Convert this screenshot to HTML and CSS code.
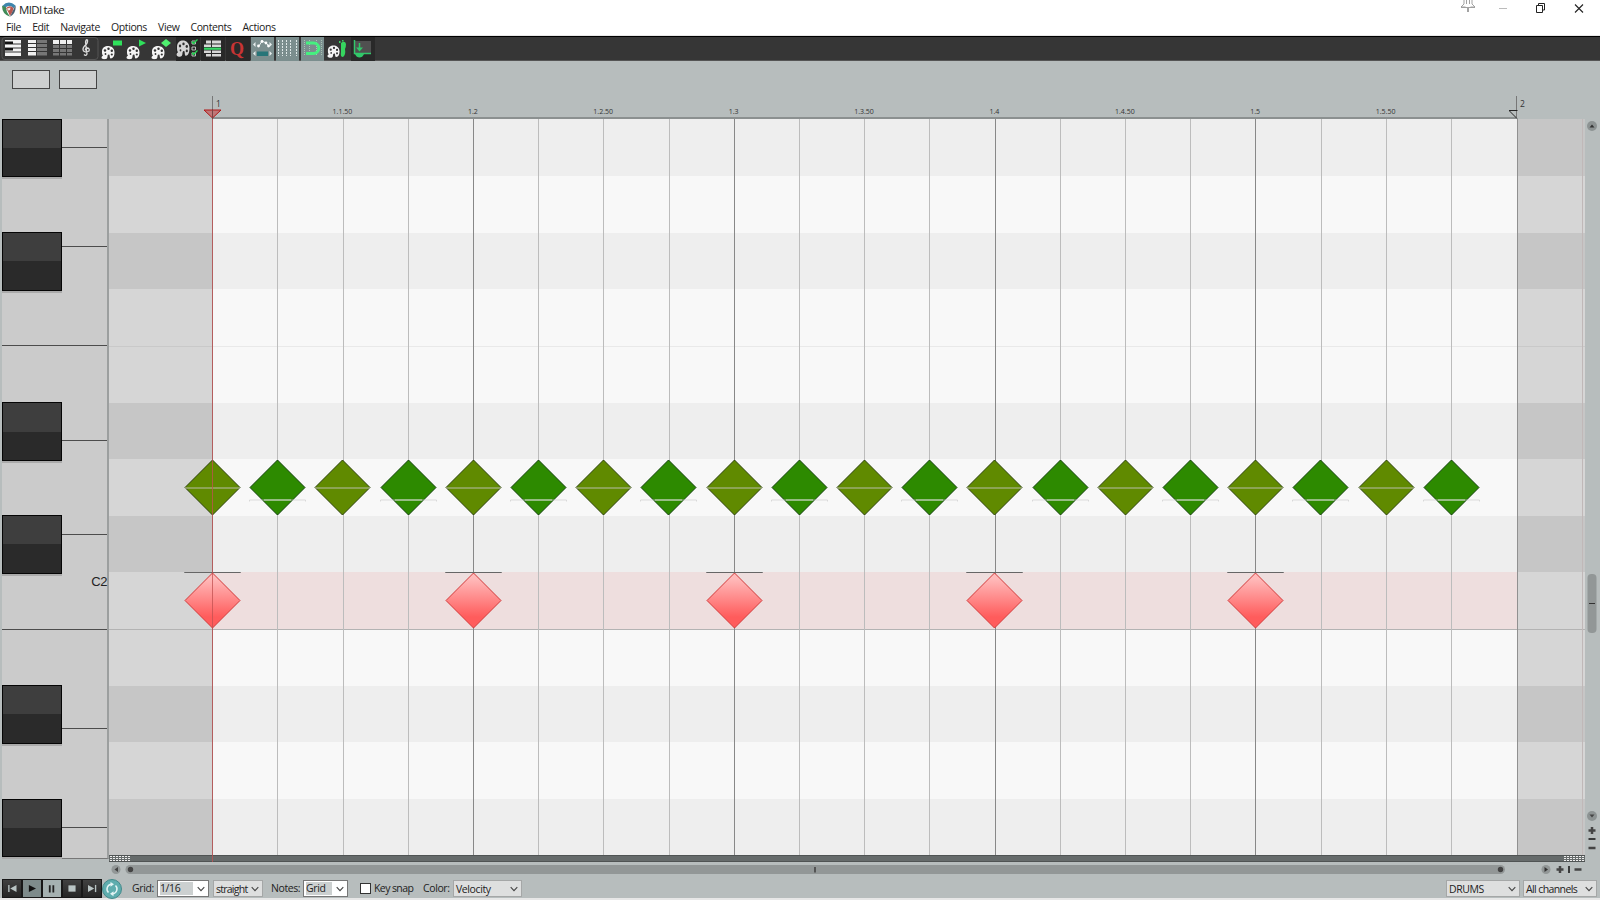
FILE: index.html
```html
<!DOCTYPE html>
<html lang="en">
<head>
  <meta charset="UTF-8" />
  <title>MIDI take</title>
  <link rel="stylesheet" href="styles.css">
</head>
<body>
  <svg width="0" height="0" class="defs">
    <defs>
      <linearGradient id="red" x1="0" y1="0" x2="0" y2="1">
        <stop offset="0.1" stop-color="#ffbaba"/><stop offset="0.8" stop-color="#ff5c5c"/>
      </linearGradient>
      <symbol id="palette" viewBox="0 0 14 14">
        <path fill="#f4f4f4" d="M1 6C1 2 4 .5 7 .5s6.500 2 6.500 6.500c0 3-1 5.500-3.500 6-1.500 0-1-2-1.500-3.500-1-1-2 0-2 1.500C6.500 14 4 14 2 13.500 0 13 0 11 2 10 1 9 1 8 1 6z"/>
        <g fill="#333"><circle cx="4" cy="5" r="1.200"/><circle cx="7.500" cy="3.200" r="1.200"/><circle cx="10.800" cy="5.300" r="1.200"/><circle cx="10.800" cy="9" r="1.100"/><circle cx="4.500" cy="8.500" r=".9"/></g>
      </symbol>
      <symbol id="chev" viewBox="0 0 8 6"><path d="M.7 1.200 4 4.600 7.300 1.200" fill="none" stroke="#444" stroke-width="1.100"/></symbol>
    </defs>
  </svg>

  <header class="titlebar">
    <svg class="logo" width="14" height="15" viewBox="0 0 14 15">
      <path fill="#3e86ad" d="M.3 4Q6.500-2.500 13.500 3.500L12 6.500Q7 2 3 6z"/>
      <path fill="#418b58" d="M.2 3.800 3.800 5 5 10 8 14.700Q-.5 12 .2 3.800z"/>
      <path fill="#b8574f" d="M4 6Q8 2.500 11.500 6L10.500 10 8 14 6.500 10.500z"/>
      <path fill="#4b5f70" d="M13.500 3.500Q14.500 11 8 14.700L11 8.500z"/>
      <path fill="#f3e4df" d="M5 6.500 8.500 5.500 8 8 6 8.500z"/>
    </svg>
    <span class="title">MIDI take</span>
    <svg class="winbtns" width="130" height="17" viewBox="0 0 130 17" fill="none">
      <path stroke="#999" stroke-width=".9" d="M5 0v4l-3 3h4.500M13 0v4l3 3h-4.500M2 7.500h14M7.500 0v4M10.500 0v4M8.500 8v4M9.500 8v4"/>
      <path stroke="#bbb" d="M40 8.500h8"/>
      <path stroke="#222" d="M77.500 5.500h6v7h-6zM79.500 5v-1.500h6v6.500h-2"/>
      <path stroke="#222" stroke-width="1.100" d="M116 4.500l8 8m0-8l-8 8"/>
    </svg>
  </header>

  <nav class="menu">
    <span>File</span><span>Edit</span><span>Navigate</span><span>Options</span><span>View</span><span>Contents</span><span>Actions</span>
  </nav>

  <div class="toolbar">
    <svg width="380" height="24" viewBox="0 0 380 24">
      <rect x="2" y=".5" width="96" height="22" rx="3" fill="none" stroke="#555"/>
      <!-- piano roll -->
      <path fill="#f4f4f4" d="M5 3h16v3.500H5zM5 7.500h16v3H5zM5 11.500h16v3H5zM5 15.500h16v3.500H5z"/>
      <path fill="#111" d="M5 4.500h8v2.500H5zM5 11h8v2.500H5z"/>
      <!-- named notes -->
      <path fill="#f0f0f0" d="M28 3h8v3h-8zM28 7h8v3h-8zM28 11h8v3h-8zM28 15h8v3.500h-8z"/>
      <path fill="#777" d="M37 3h10v3H37zM37 7h10v3H37zM37 11h10v3H37zM37 15h10v3.500H37z"/>
      <!-- event list -->
      <path fill="#f0f0f0" d="M53 3h6v4h-6zM60 3h6v4h-6zM67 3h5v4h-5z"/>
      <path fill="#777" d="M53 8h6v3h-6zM60 8h6v3h-6zM67 8h5v3h-5zM53 12h6v3h-6zM60 12h6v3h-6zM67 12h5v3h-5zM53 16h6v2.500h-6zM60 16h6v2.500h-6zM67 16h5v2.500h-5z"/>
      <!-- notation -->
      <path fill="none" stroke="#ddd" stroke-width="1.300" d="M84 17.500q2 2 3-.5L85.500 5q.5-3 2-2 .5 3-2.500 5.500-3 3-1.500 5.500 2.500 2 5.500 0 1-3-2-3-2 .5-1.500 2.500"/>
      <use href="#palette" x="101" y="8.500" width="14" height="14"/>
      <path fill="#2fe05b" d="M113 3.500h9v5h-9z"/>
      <use href="#palette" x="126" y="8.500" width="14" height="14"/>
      <path fill="#2fe05b" d="M139 2.500l7 3.500-7 3.500z"/>
      <use href="#palette" x="151" y="8.500" width="14" height="14"/>
      <path fill="#4ff06f" d="M161 6l5-4 5 4-5 4z"/>
      <path fill="#262626" d="M176 0h24v24h-24z"/>
      <svg x="176" y="3" width="14" height="17" viewBox="0 0 14 14" preserveAspectRatio="none" opacity=".85"><use href="#palette" width="14" height="14"/></svg>
      <g fill="none" stroke="#ccc" stroke-width=".9"><path d="M192 4h3.500v3H192zM192 10h3.500v3H192zM192 16h3.500v3H192z"/><path stroke="#23d851" stroke-width="1.300" d="M192 4.500l1.500 2 4-4M192 15.500l1.500 2 4-4"/></g>
      <path fill="#292929" d="M201 0h24v24h-24zM226 0h24v24h-24z"/>
      <path fill="#d8d8d8" d="M206 3.500h5v3h-5zM212 3.500h9v3h-9zM204 7.500h7v2.500h-7zM212 7.500h9v2.500h-9zM204 13.500h7v2.500h-7zM212 13.500h9v2.500h-9zM206 17h5v2.500h-5zM212 17h9v2.500h-9z"/>
      <path fill="#38d867" d="M204 10.600h17v2.200h-17z"/>
      <path fill="#7b8e8e" d="M251 0h23v24h-23zM276 0h23v24h-23zM301 0h23v24h-23z"/>
      <path fill="none" stroke="#e7eeee" d="M259 9l3-5 4 2 3 3"/><path fill="#e7eeee" d="M253 7.500l2.500-2.500v5zM272 7.500l-2.500-2.500v5zM253 16.500l2.500-2.500v5zM272 16.500l-2.500-2.500v5z"/>
      <g fill="#fff"><circle cx="258.500" cy="9" r="1.400"/><circle cx="262" cy="4.500" r="1.400"/><circle cx="266" cy="6" r="1.400"/><circle cx="268.500" cy="9" r="1.400"/></g>
      <path fill="#277578" d="M257 14.500h11v4.500h-11z"/>
      <path fill="none" stroke="#dfe8e8" stroke-dasharray="2 1" d="M278.500 3v16M282.500 3v16M286.500 3v16M290.500 3v16M296.500 3v16"/>
      <path fill="none" stroke="#a9c4b5" stroke-dasharray="1 1" d="M304.500 3v16M309.500 3v16M316.500 3v16M321.500 3v16"/>
      <path fill="none" stroke="#45f080" stroke-width="3" d="M306 6h7.500a5 5 0 0 1 0 10.500H306"/>
      <use href="#palette" x="327" y="8" width="13" height="13"/>
      <path fill="#36d65f" d="M341 6q4-3 5 1 0 3-1 5 1 6-2 8-3 0-2-5zM339 4h1.500v2H339zM342 3h1.500v1.500H342z"/>
      <path fill="#292929" d="M351 0h24v24h-24z"/><path fill="#505050" d="M355 4h16v12h-16z"/>
      <path fill="none" stroke="#31c86a" stroke-width="1.500" d="M354.500 3v13.500H371M359.500 6v6"/>
      <path fill="#31c86a" d="M356 10.500h7l-3.500 4zM355 17h9q-1.500 3.500-4.500 3.500t-4.500-3.500z"/>
      <text class="q" x="230" y="17.500">Q</text>
    </svg>
  </div>

  <div class="info"><div class="box"></div><div class="box"></div></div>

  <main class="editor">
    <div class="keys" id="keys"><span class="octave">C2</span></div>
    <div class="roll">
      <div class="ruler" id="ruler"></div>
      <div class="rows" id="rows"></div>
      <div class="lines" id="lines"></div>
      <div id="notes"></div>
      <i class="cursor"></i><i class="end"></i><i class="edge"></i>
      <svg class="mark start" width="19" height="10" viewBox="0 0 19 10"><path d="M1 1h17L9.500 9z" fill="#bf7777" stroke="#b01616"/><path d="M9.500 0v10" stroke="#744"/></svg>
      <svg class="mark stop" width="10" height="10" viewBox="0 0 10 10"><path d="M1 1.500h8.500M1.500 2l7.500 7.500" fill="none" stroke="#222"/></svg>
    </div>
    <div class="vscroll">
      <svg width="15" height="740" viewBox="0 0 15 740">
        <circle cx="7" cy="7" r="5" fill="#8d9393"/><path d="M4.500 8.500l2.500-3 2.500 3z" fill="#333"/>
        <rect x="2.500" y="455" width="9" height="59" rx="4" fill="#929797"/><path d="M4 484.500h6" stroke="#333"/>
        <circle cx="7" cy="697" r="5" fill="#8d9393"/><path d="M4.500 695.500l2.500 3 2.500-3z" fill="#444"/>
        <path d="M3.500 711.500h7M7 708v7M3.500 729h7" stroke="#444" stroke-width="2.500"/><path d="M3.500 720h7" stroke="#111" stroke-width="1.500"/>
      </svg>
    </div>
  </main>

  <div class="lane"><div class="strip"><i class="grip"></i><i class="grip"></i></div></div>

  <div class="hscroll">
    <svg width="1600" height="18" viewBox="0 0 1600 18">
      <circle cx="116" cy="7.500" r="4.500" fill="#929797"/><path d="M118 5v5l-3.500-2.500z" fill="#444"/>
      <rect x="125.500" y="3" width="1379.500" height="9" rx="4.500" fill="#929797"/>
      <circle cx="130.500" cy="7.500" r="2.700" fill="#444"/><circle cx="1500.500" cy="7.500" r="2.700" fill="#444"/><path d="M815 5v5.500" stroke="#444" stroke-width="1.600"/>
      <circle cx="1546" cy="7.500" r="4.500" fill="#929797"/><path d="M1544.500 5v5l3.500-2.500z" fill="#333"/>
      <path d="M1556.500 7.500h7M1560 4v7M1574.500 7.500h7" stroke="#444" stroke-width="2.500"/><path d="M1569 4v7" stroke="#111" stroke-width="1.500"/>
    </svg>
  </div>

  <footer class="bottom">
    <div class="transport">
      <span><svg viewBox="0 0 20 19"><path d="M6.500 5.500v8" stroke="#b9c4c4" stroke-width="1.500"/><path d="M15 5.500v8l-7-4z" fill="#b9c4c4"/></svg></span>
      <span class="play"><svg viewBox="0 0 20 19"><path d="M6.500 5.500v8l8-4z" fill="#111"/></svg></span>
      <span class="pause"><svg viewBox="0 0 20 19"><path d="M7.500 6v8M11.500 6v8" stroke="#222" stroke-width="2"/></svg></span>
      <span><svg viewBox="0 0 20 19"><path d="M6 6h8v7H6z" fill="#b9c4c4"/></svg></span>
      <span><svg viewBox="0 0 20 19"><path d="M5.500 5.500v8l7-4z" fill="#b9c4c4"/><path d="M14 5.500v8" stroke="#b9c4c4" stroke-width="1.500"/></svg></span>
      <svg width="20" height="20" viewBox="0 0 20 20"><circle cx="10" cy="10" r="9.500" fill="#5fadae" stroke="#438a8b"/><g fill="none" stroke="#e3f4f4" stroke-width="1.500"><path d="M6.500 13.500A4.800 4.800 0 0 1 9 5.300M13.500 6.500a4.800 4.800 0 0 1-2.500 8.200"/></g><path fill="#e3f4f4" d="M8.500 3l3.500 2.300-3.500 2.500zM11.500 12.200v5l-3.500-2.500z"/></svg>
    </div>
    <label class="l-grid">Grid:</label>
    <div class="select white grid"><b>1/16</b><svg width="8" height="6"><use href="#chev"/></svg></div>
    <div class="select straight">straight<svg width="8" height="6"><use href="#chev"/></svg></div>
    <label class="l-notes">Notes:</label>
    <div class="select white len"><b>Grid</b><svg width="8" height="6"><use href="#chev"/></svg></div>
    <i class="check"></i><label class="l-snap">Key snap</label>
    <label class="l-color">Color:</label>
    <div class="select vel">Velocity<svg width="8" height="6"><use href="#chev"/></svg></div>
    <div class="select drums">DRUMS<svg width="8" height="6"><use href="#chev"/></svg></div>
    <div class="select chan">All channels<svg width="8" height="6"><use href="#chev"/></svg></div>
  </footer>

  <script src="roll.js"></script>
</body>
</html>
```
FILE: roll.js
```js
const START = 103.5;   // x of bar 1 inside the roll
const STEP = 65.2;     // width of a 1/16

function add(parent, cls, css, html) {
  const el = document.createElement('div');
  el.className = cls;
  el.style.cssText = css || '';
  el.innerHTML = html || '';
  document.getElementById(parent).appendChild(el);
  return el;
}

// d = black key row, w = white key row, r = selected row, c = row under a C
'dwdwcdwdrcdwd'.split('').forEach((c) => add('rows', 'row ' + c));

for (let i = 0; i < 20; i++) {
  add('lines', i % 4 ? 'cell' : 'cell beat');
}

// keyboard
[[119, 58], [232, 59], [402, 59], [515, 59], [685, 59], [799, 58]].forEach(([y, h]) => {
  add('keys', 'black', `top:${y - 119}px;height:${h}px`);
});
[147, 246, 440, 534, 728, 827].forEach((y) => add('keys', 'sep', `top:${y - 119}px`));
[345, 629].forEach((y) => add('keys', 'sep full', `top:${y - 119}px`));

// ruler labels
for (let i = 1; i < 10; i++) {
  const beat = 1 + Math.floor(i / 2);
  const text = i % 2 ? `1.${beat}.50` : `1.${beat}`;
  add('ruler', 'label', `left:${START + i * STEP * 2 - 0.5}px`, text);
}
add('ruler', 'bar', 'left:103px', '1');
add('ruler', 'bar', 'left:1407px', '2');

function note(x, y, fill, stroke, line) {
  add('notes', 'note', `left:${x - 28.5}px;top:${y - 28.5}px`,
    `<svg width="57" height="57" viewBox="0 0 57 57"><path d="M28.500 1 56 28.500 28.500 56 1 28.500z" fill="${fill}" stroke="${stroke}"/>${line}</svg>`);
}

for (let i = 0; i < 20; i++) {
  const x = START + i * STEP;
  if (i % 2) {
    note(x, 368, '#2d8a00', '#10400a', '<path d="M.5 42.500v-1.500h56v1.500" fill="none" stroke="#ccc" stroke-opacity=".65"/><path d="M15 41h27" stroke="#cdd8c5"/>');
  } else {
    note(x, 368, '#608a00', '#2b4108', '<path d="M1 29h55" stroke="#b9bda8"/>');
  }
  if (i % 4 === 0) {
    note(x, 481.5, 'url(#red)', '#d23a3a', '<path d="M.5 1V.5h56V1" fill="none" stroke="#666"/>');
  }
}
```
FILE: styles.css
```css
* { box-sizing: border-box; }

body {
  margin: 0;
  width: 1600px;
  height: 900px;
  overflow: hidden;
  background: #b7bdbd;
  font-family: "Open Sans", "Noto Sans", sans-serif;
  font-size: 10.5px;
  letter-spacing: -0.4px;
  color: #222;
}

i { display: block; }
svg { display: block; flex: none; }
.defs { position: absolute; }

.titlebar {
  height: 19px;
  display: flex;
  align-items: flex-start;
  background: #fff;
  padding-left: 2px;
}
.logo { margin-top: 2px; }
.title {
  font-size: 11.5px;
  line-height: 19px;
  margin-left: 3px;
  letter-spacing: -0.6px;
}
.title { word-spacing: -0.5px; }
.winbtns { margin-left: auto; margin-right: 11px; }

.menu {
  height: 17px;
  display: flex;
  background: #fff;
  line-height: 17px;
  padding-left: 6px;
  border-bottom: 1px solid #e8e8e8;
  white-space: nowrap;
}
.menu span { margin-right: 11.1px; }

.toolbar {
  height: 25px;
  background: #363636;
  border-top: 1px solid #000;
  border-bottom: 1px solid #555;
}
.q { font: bold 18px "Liberation Serif", serif; fill: #c83434; }

.info {
  height: 58px;
  display: flex;
  gap: 9px;
  padding: 9px 0 0 12px;
}
.box {
  width: 38px;
  height: 19px;
  background: #cdcfcf;
  border: 1px solid #444;
}

.editor { display: flex; height: 736px; }

/* keyboard */
.keys {
  position: relative;
  width: 107px;
  height: 740px;
  margin-left: 2px;
  background: #cbcbcb;
  border-right: 2px solid #9c9f9f;
  border-bottom: 1px solid #777;
}
.black {
  position: absolute;
  left: 0;
  width: 60px;
  background: linear-gradient(#3e3e3e 50%, #2a2a2a 50%);
  border: 1px solid #050505;
  box-shadow: 0 2px 0 #aaa;
}
.sep {
  position: absolute;
  left: 60px;
  right: 0;
  height: 1px;
  background: #4c4c4c;
}
.full { left: 0; }
.octave {
  position: absolute;
  right: 0;
  top: 455px;
  font: 13px "Liberation Sans", sans-serif;
}

/* note area */
.roll { position: relative; width: 1476px; }
.rows {
  height: 736px;
  display: grid;
  grid-template-rows: 57px repeat(11, 56.65px) 56px;
  background: #fff;
  overflow: hidden;
}
.row {
  background: linear-gradient(90deg, #d6d6d6 103px, #f8f8f8 103px, #f8f8f8 1408px, #d6d6d6 1408px);
}
.row.d {
  background: linear-gradient(90deg, #c6c6c6 103px, #eee 103px, #eee 1408px, #c6c6c6 1408px);
}
.row.r {
  background: linear-gradient(90deg, #d6d6d6 103px, #eedede 103px, #eedede 1408px, #d6d6d6 1408px);
}
.row.c { border-top: 1px solid rgba(0, 0, 0, 0.06); }
.row.r + .c { border-color: #b3b3b3; }
.lines {
  position: absolute;
  top: 0;
  left: 103.3px;
  width: 1304px;
  height: 736px;
  display: grid;
  grid-template-columns: repeat(20, 1fr);
}
.cell { border-left: 1px solid #bcbcbc; }
.cell.beat { border-color: #888; }

.cursor {
  position: absolute;
  left: 103px;
  top: 0;
  width: 1px;
  height: 743px;
  background: rgba(195, 80, 80, 0.75);
}
.end {
  position: absolute;
  left: 1408px;
  top: 0;
  width: 1px;
  height: 736px;
  background: #909090;
}
.edge {
  position: absolute;
  left: 1473px;
  top: 0;
  width: 1px;
  height: 736px;
  background: #c0b8b8;
}
.note { position: absolute; }

.ruler {
  position: absolute;
  top: -24px;
  left: 0;
  width: 100%;
  height: 24px;
}
.ruler::after {
  content: "";
  position: absolute;
  left: 103px;
  width: 1305px;
  bottom: 0;
  height: 2px;
  background: #8b9090;
}
.label {
  position: absolute;
  top: 12px;
  transform: translateX(-50%);
  font-size: 7px;
  line-height: 10px;
  letter-spacing: 0;
  color: #333;
}
.bar {
  position: absolute;
  top: 1px;
  height: 23px;
  border-left: 1px solid #777;
  padding-left: 3px;
  font-size: 8.5px;
  line-height: 15px;
  color: #333;
}
.mark { position: absolute; top: -10px; }
.start { left: 94px; }
.stop { left: 1399px; }

.vscroll { width: 15px; }

/* cc lane handle */
.lane { height: 7px; padding-left: 109px; }
.strip {
  display: flex;
  justify-content: space-between;
  width: 1476px;
  height: 7px;
  background: #666b6b;
  border-top: 1px solid #505454;
  border-bottom: 1px solid #505454;
  padding: 0 1px;
}
.grip {
  width: 20px;
  background:
    repeating-linear-gradient(90deg, transparent 0 2px, #666b6b 2px 3px),
    repeating-linear-gradient(#eee 0 1px, #666b6b 1px 2px);
}

.hscroll { height: 16px; }

.bottom {
  display: flex;
  align-items: flex-start;
  height: 22px;
  padding: 1px 3px 0 2px;
  border-bottom: 2px solid #e7e7e7;
  white-space: nowrap;
}
.bottom label { line-height: 19px; }
.transport { display: flex; }
.transport span {
  width: 20px;
  height: 19px;
  background: linear-gradient(#404040, #262626);
  border: 1px solid #181818;
}
.transport span svg { width: 18px; height: 17px; }
.transport .play { background: #7e8b8b; }
.transport .pause { background: #a5b1b1; }

.select {
  display: flex;
  align-items: center;
  justify-content: space-between;
  height: 17px;
  margin-top: 1px;
  padding: 0 3px 0 2px;
  background: #dedfdf;
  border: 1px solid #a5a7a7;
}
.white { background: #fff; border-color: #777; }
.white b {
  font-weight: normal;
  background: #ccd0d0;
  line-height: 13px;
}
.l-grid { width: 25px; margin-left: 10px; }
.grid { width: 52px; }
.grid b { width: 33px; }
.straight { width: 50px; margin-left: 4px; letter-spacing: -0.75px; }
.l-notes { width: 32px; margin-left: 8px; }
.len { width: 45px; }
.len b { width: 26px; }
.check {
  width: 11px;
  height: 11px;
  margin: 4px 3px 0 12px;
  background: #fff;
  border: 1px solid #333;
}
.l-snap { width: 49px; letter-spacing: -0.6px; }
.l-color { width: 30px; }
.vel { width: 69px; }
.drums { width: 74px; margin-left: auto; }
.chan { width: 74px; margin-left: 3px; letter-spacing: -0.6px; }
```
